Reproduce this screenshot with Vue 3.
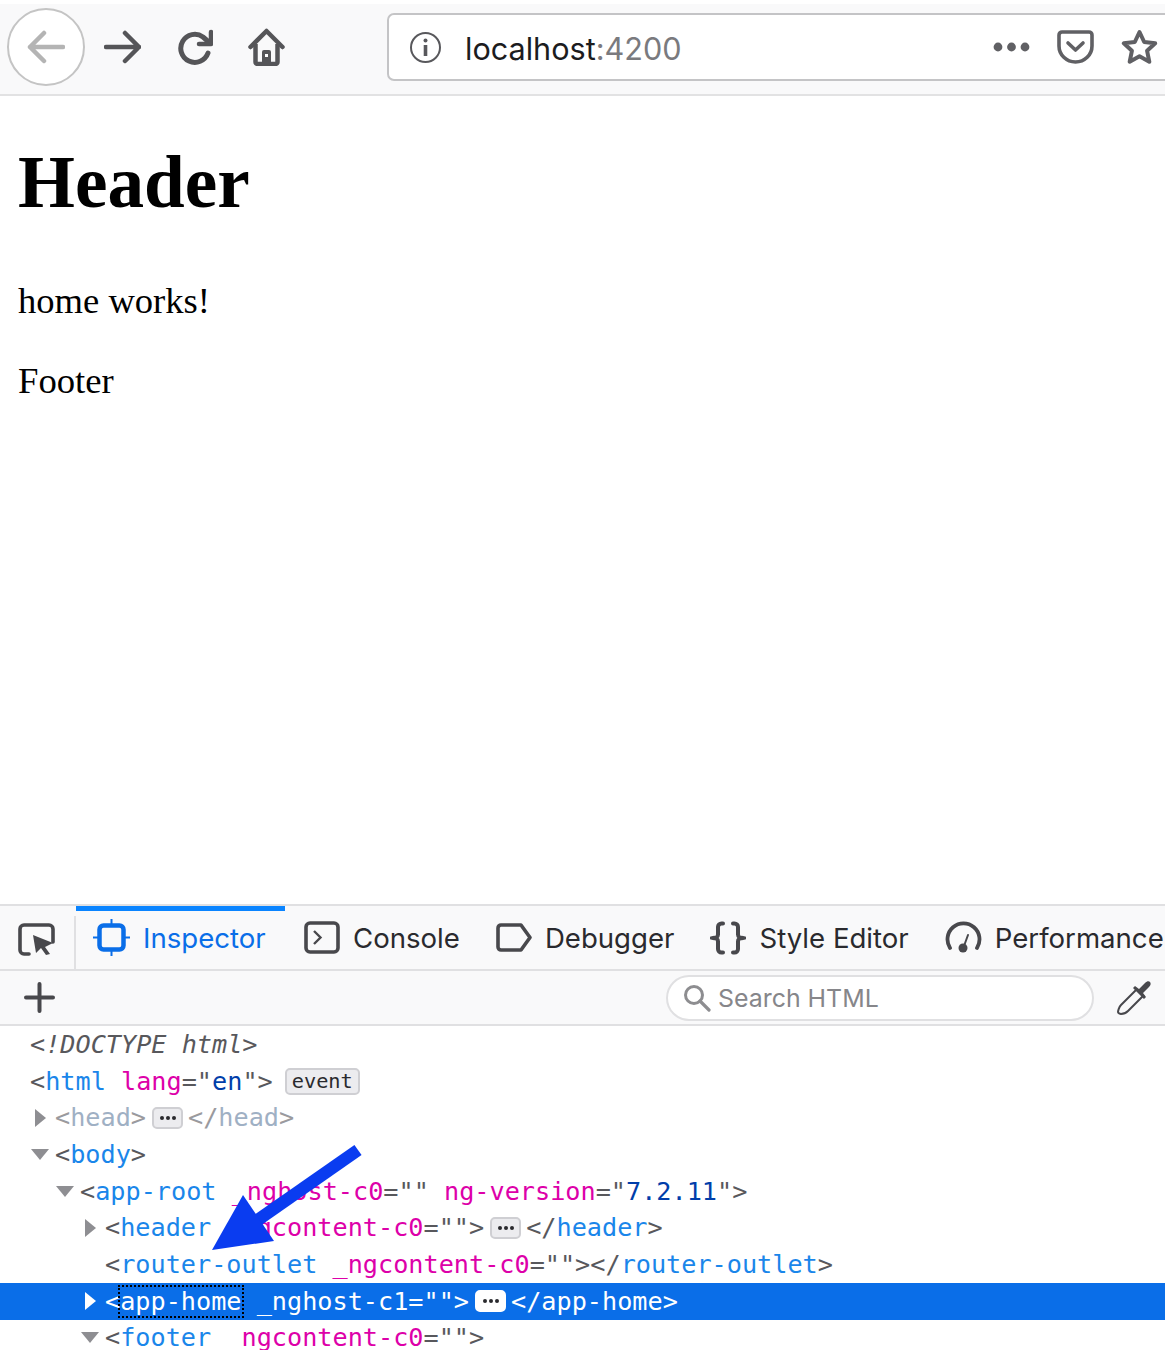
<script setup>
const rows = [
  { depth: 0, parts: [['doc', '<!DOCTYPE html>']] },
  { depth: 0, parts: [['p', '<'], ['n', 'html'], ['p', ' '], ['a', 'lang'], ['p', '="'], ['v', 'en'], ['p', '">'], ['event', 'event']] },
  { depth: 1, twisty: 'right', dim: true, parts: [['p', '<'], ['n', 'head'], ['p', '>'], ['more', ''], ['p', '</'], ['n', 'head'], ['p', '>']] },
  { depth: 1, twisty: 'down', parts: [['p', '<'], ['n', 'body'], ['p', '>']] },
  { depth: 2, twisty: 'down', parts: [['p', '<'], ['n', 'app-root'], ['p', ' '], ['a', '_nghost-c0'], ['p', '="" '], ['a', 'ng-version'], ['p', '="'], ['v', '7.2.11'], ['p', '">']] },
  { depth: 3, twisty: 'right', parts: [['p', '<'], ['n', 'header'], ['p', ' '], ['a', '_ngcontent-c0'], ['p', '="">'], ['more', ''], ['p', '</'], ['n', 'header'], ['p', '>']] },
  { depth: 3, parts: [['p', '<'], ['n', 'router-outlet'], ['p', ' '], ['a', '_ngcontent-c0'], ['p', '=""></'], ['n', 'router-outlet'], ['p', '>']] },
  { depth: 3, twisty: 'right', selected: true, parts: [['p', '<'], ['focus', 'app-home'], ['p', ' '], ['a', '_nghost-c1'], ['p', '="">'], ['more', ''], ['p', '</'], ['n', 'app-home'], ['p', '>']] },
  { depth: 3, twisty: 'down', parts: [['p', '<'], ['n', 'footer'], ['p', ' '], ['a', '_ngcontent-c0'], ['p', '="">']] },
]
const indent = (d) => ({ paddingLeft: `${5 + 25 * d}px` })
</script>

<template>
  <div class="root">
    <div class="toolbar">
      <button class="back" aria-label="Back">
        <svg width="38" height="34" viewBox="0 0 38 34"><path d="M36 17H3M17 3 3 17l14 14" fill="none" stroke="#b4b4b4" stroke-width="4.5" stroke-linecap="round" stroke-linejoin="round"/></svg>
      </button>
      <svg class="nav fwd" width="37" height="34" viewBox="0 0 37 34"><path d="M2 17h33M21 3l14 14-14 14" fill="none" stroke="#555558" stroke-width="4.5" stroke-linecap="round" stroke-linejoin="round"/></svg>
      <svg class="nav rel" width="37" height="36" viewBox="0 0 37 36"><path d="M32 24A14 14 0 1 1 27 8L34 14" fill="none" stroke="#555558" stroke-width="5" stroke-linecap="round"/><path d="M35 3V15H23" fill="none" stroke="#555558" stroke-width="4.5" stroke-linecap="round" stroke-linejoin="round"/></svg>
      <svg class="nav home" width="37" height="38" viewBox="0 0 37 38"><path d="M2.500 19 18.500 3l16 16" fill="none" stroke="#555558" stroke-width="4.500" stroke-linecap="round" stroke-linejoin="round"/><path d="M7.500 16v18a2 2 0 0 0 2 2h18a2 2 0 0 0 2-2V16" fill="none" stroke="#555558" stroke-width="4.500"/><path d="M14 36V24a2 2 0 0 1 2-2h5a2 2 0 0 1 2 2v12z" fill="#555558"/><rect x="17" y="26" width="3" height="3" fill="#fff"/></svg>
      <div class="url">
        <svg class="info" width="33" height="33" viewBox="0 0 33 33"><circle cx="16.500" cy="16.500" r="14.500" fill="none" stroke="#58585c" stroke-width="2"/><circle cx="16.500" cy="9.500" r="2" fill="#58585c"/><path d="M16.500 14v11" stroke="#58585c" stroke-width="3.600"/></svg>
        <span class="host">localhost<span class="port">:4200</span></span>
        <div class="url-actions">
          <svg width="37" height="10" viewBox="0 0 37 10"><circle cx="5" cy="5" r="4.400" fill="#606064"/><circle cx="18.500" cy="5" r="4.400" fill="#606064"/><circle cx="32" cy="5" r="4.400" fill="#606064"/></svg>
          <svg width="37" height="34" viewBox="0 0 37 34"><path d="M5 2h27a3 3 0 0 1 3 3v11a16.500 16 0 0 1-33 0V5a3 3 0 0 1 3-3z" fill="none" stroke="#606064" stroke-width="3.600"/><path d="m11 13 7.500 7 7.500-7" fill="none" stroke="#606064" stroke-width="3.600" stroke-linecap="round" stroke-linejoin="round"/></svg>
          <svg width="37" height="36" viewBox="0 0 37 36"><path d="m18.500 3 4.700 10 11 1.300-8.100 7.500 2.200 10.900-9.800-5.400-9.800 5.400 2.200-10.900L2.800 14.300l11-1.300z" fill="none" stroke="#606064" stroke-width="4" stroke-linejoin="round"/></svg>
        </div>
      </div>
    </div>

    <main class="page">
      <h1>Header</h1>
      <p class="works">home works!</p>
      <p class="foot">Footer</p>
    </main>

    <section class="devtools">
      <div class="tabs">
        <svg class="picker" width="37" height="33" viewBox="0 0 37 33"><path d="M11 31H6a4 4 0 0 1-4-4V6a4 4 0 0 1 4-4h25a4 4 0 0 1 4 4v13" fill="none" stroke="#48484c" stroke-width="3.600" stroke-linecap="round"/><path d="M15 12 35 20l-8 4 5 7-4 1-5-7-5 5z" fill="#48484c"/></svg>
        <span class="sep"></span>
        <div class="tab active">
          <svg width="37" height="37" viewBox="0 0 37 37"><rect x="6.500" y="6.500" width="24" height="24" rx="4" fill="none" stroke="#0a6ee8" stroke-width="4.500"/><path d="M18.500 0v6M18.500 31v6M0 18.500h6M31 18.500h6" stroke="#0a6ee8" stroke-width="2"/></svg>
          <span>Inspector</span>
        </div>
        <div class="tab">
          <svg width="36" height="33" viewBox="0 0 36 33"><rect x="2" y="2" width="32" height="29" rx="4" fill="none" stroke="#48484c" stroke-width="3.600"/><path d="m10 10 6.500 6.500L10 23" fill="none" stroke="#48484c" stroke-width="2.400"/></svg>
          <span>Console</span>
        </div>
        <div class="tab">
          <svg width="36" height="29" viewBox="0 0 36 29"><path d="M5 2h20l9 12.500L25 27H5a3 3 0 0 1-3-3V5a3 3 0 0 1 3-3z" fill="none" stroke="#48484c" stroke-width="3.600" stroke-linejoin="round"/></svg>
          <span>Debugger</span>
        </div>
        <div class="tab">
          <svg width="36" height="34" viewBox="0 0 36 34"><path d="M13 2.500h-1.500A3.500 3.500 0 0 0 8 6v7a4 4 0 0 1-5.500 4A4 4 0 0 1 8 21v7a3.500 3.500 0 0 0 3.500 3.500H13M23 2.500h1.500A3.500 3.500 0 0 1 28 6v7a4 4 0 0 0 5.500 4A4 4 0 0 0 28 21v7a3.500 3.500 0 0 1-3.500 3.500H23" fill="none" stroke="#48484c" stroke-width="4" stroke-linecap="round"/></svg>
          <span>Style Editor</span>
        </div>
        <div class="tab">
          <svg width="37" height="33" viewBox="0 0 37 33"><path d="M5 27A16 16 0 1 1 32 27" fill="none" stroke="#48484c" stroke-width="3.800" stroke-linecap="round"/><circle cx="18" cy="27" r="4.500" fill="#48484c"/><path d="m19 25 4-11" stroke="#48484c" stroke-width="2" stroke-linecap="round"/></svg>
          <span>Performance</span>
        </div>
      </div>

      <div class="search-bar">
        <svg class="plus" width="31" height="31" viewBox="0 0 31 31"><path d="M15.500 2v27M2 15.500h27" stroke="#48484c" stroke-width="4" stroke-linecap="round"/></svg>
        <div class="search">
          <svg width="28" height="28" viewBox="0 0 28 28"><circle cx="11" cy="11" r="8.500" fill="none" stroke="#8d8d90" stroke-width="3"/><path d="m17 17 9 9" stroke="#8d8d90" stroke-width="3.200" stroke-linecap="round"/></svg>
          <span>Search HTML</span>
        </div>
        <svg class="dropper" width="36" height="36" viewBox="0 0 36 36"><path d="M21 9 5 25c-2 2-3 6-3 7s2 2 3 2c2 0 5-1 7-3l16-16" fill="none" stroke="#48484c" stroke-width="2"/><path d="m17 8 11 11 2-2-3-4 6-6c2-2 2-4 1-5s-3-1-5 1l-6 6-4-3z" fill="#48484c"/></svg>
      </div>

      <div class="tree">
        <div v-for="(r, i) in rows" :key="i" class="row" :class="{ dim: r.dim, selected: r.selected }" :style="indent(r.depth)">
          <span class="slot"><span v-if="r.twisty" class="twisty" :class="r.twisty"></span></span>
          <template v-for="(p, j) in r.parts" :key="j">
            <span v-if="p[0] === 'more'" class="more"><i></i><i></i><i></i></span>
            <span v-else class="tok" :class="p[0]">{{ p[1] }}</span>
          </template>
        </div>
      </div>
    </section>

    <svg class="pointer" width="160" height="115" viewBox="0 0 160 115"><path d="M148 8 45 80" stroke="#0a3cf0" stroke-width="12.500"/><path d="M33 53 2 108l62-9z" fill="#0a3cf0"/></svg>
  </div>
</template>

<style>
html, body { margin: 0; background: #fff; }
</style>

<style scoped>
.root {
  position: relative;
  width: 1165px;
  height: 1350px;
  display: flex;
  flex-direction: column;
  overflow: hidden;
  background: #fff;
  font-family: Inter, "Liberation Sans", sans-serif;
}
.toolbar {
  flex: none;
  box-sizing: border-box;
  height: 92px;
  margin-top: 4px;
  padding-left: 7px;
  display: flex;
  align-items: center;
  background: #f9f9fa;
  border-bottom: 2px solid #e2e2e3;
}
.back {
  flex: none;
  box-sizing: border-box;
  width: 78px;
  height: 78px;
  margin: 0 19px 4px 0;
  padding: 0;
  display: flex;
  align-items: center;
  justify-content: center;
  background: #fff;
  border: 2px solid #c4c4c4;
  border-radius: 50%;
}
.nav { flex: none; margin-bottom: 4px; }
.rel { margin-left: 35px; }
.home { margin-left: 35px; }
.url {
  flex: none;
  box-sizing: border-box;
  width: 790px;
  height: 68px;
  margin: 0 0 4px 102px;
  padding-left: 20px;
  display: flex;
  align-items: center;
  background: #fff;
  border: 2px solid #c4c4c6;
  border-radius: 7px;
}
.info { flex: none; }
.host {
  margin-left: 23px;
  padding-top: 2px;
  font-size: 30.600px;
  color: #1c1c1e;
}
.port { color: #7a7a7e; }
.url-actions {
  margin-left: 311px;
  display: flex;
  align-items: center;
  gap: 27px;
}
.page {
  flex: 1;
  padding: 0 18px;
  font-family: "Liberation Serif", serif;
  color: #000;
}
.page h1 {
  margin: 46px 0 0;
  font-size: 73.200px;
  line-height: 82px;
  font-weight: 700;
}
.works {
  margin: 55px 0 0;
  font-size: 36.600px;
  line-height: 44px;
}
.foot {
  margin: 36px 0 0;
  font-size: 36.700px;
  line-height: 44px;
}
.devtools {
  flex: none;
  height: 446px;
  border-top: 2px solid #e0e0e2;
  box-sizing: border-box;
  background: #fff;
}
.tabs {
  box-sizing: border-box;
  height: 65px;
  display: flex;
  align-items: center;
  background: #f9f9fa;
  border-bottom: 2px solid #e0e0e2;
}
.picker { flex: none; margin: 4px 0 0 18px; }
.sep {
  flex: none;
  align-self: stretch;
  width: 2px;
  margin: 10px 0 0 19px;
  background: #e0e0e2;
}
.tab {
  flex: none;
  box-sizing: border-box;
  height: 63px;
  padding: 0 18px;
  display: flex;
  align-items: center;
  gap: 13px;
  font-size: 27.600px;
  color: #2a2a2e;
  white-space: nowrap;
}
.tab.active {
  width: 209px;
  margin-right: 1px;
  padding: 0 0 5px 17px;
  color: #0a6ee8;
  border-top: 5px solid #0a84ff;
}
.search-bar {
  box-sizing: border-box;
  height: 55px;
  display: flex;
  align-items: center;
  background: #f9f9fa;
  border-bottom: 2px solid #e0e0e2;
}
.plus { flex: none; margin-left: 24px; }
.search {
  flex: none;
  box-sizing: border-box;
  width: 428px;
  height: 46px;
  margin-left: 611px;
  padding-left: 15px;
  display: flex;
  align-items: center;
  gap: 7px;
  background: #fff;
  border: 2px solid #e0e0e2;
  border-radius: 23px;
  font-size: 24.900px;
  color: #86868a;
}
.dropper { flex: none; margin-left: 22px; }
.tree {
  font-family: "DejaVu Sans Mono", "Liberation Mono", monospace;
  font-size: 25.200px;
  color: #58585c;
}
.row {
  box-sizing: border-box;
  height: 36.700px;
  display: flex;
  align-items: center;
  white-space: pre;
}
.slot {
  flex: none;
  width: 25px;
  height: 100%;
  display: flex;
  align-items: center;
  justify-content: center;
  transform: translateX(-3px);
}
.twisty { display: block; width: 0; height: 0; border-style: solid; border-color: transparent; }
.twisty.right { border-width: 9px 0 9px 11px; border-left-color: #8e8e92; transform: translateX(1px); }
.twisty.down { border-width: 11px 9px 0; border-top-color: #8e8e92; }
.tok.doc { font-style: italic; color: #58585c; }
.tok.n { color: #1a86ea; }
.tok.a { color: #dd00a9; }
.tok.v { color: #003eaa; }
.tok.event {
  box-sizing: border-box;
  height: 27px;
  margin-left: 12px;
  padding: 0 5px;
  display: flex;
  align-items: center;
  font-size: 20.300px;
  color: #2a2a2e;
  background: #ececef;
  border: 2px solid #cfcfd3;
  border-radius: 5px;
}
.more {
  flex: none;
  box-sizing: border-box;
  width: 31px;
  height: 22px;
  margin: 0 5px 0 6px;
  display: flex;
  align-items: center;
  justify-content: center;
  gap: 2px;
  background: #ececef;
  border: 2px solid #cfcfd3;
  border-radius: 5px;
}
.more i { width: 4px; height: 4px; border-radius: 50%; background: #2a2a2e; }
.dim .tok.p { color: #9a9a9e; }
.dim .tok.n { color: #9fb0c4; }
.selected { background: #0a6ee8; color: #fff; }
.selected .tok { color: #fff !important; }
.selected .twisty.right { border-left-color: #fff; }
.selected .more { background: #fff; border-color: #fff; }
.selected .tok.focus { outline: 2px dotted #000; line-height: 29px; }
.pointer {
  position: absolute;
  left: 210px;
  top: 1142px;
}
</style>
